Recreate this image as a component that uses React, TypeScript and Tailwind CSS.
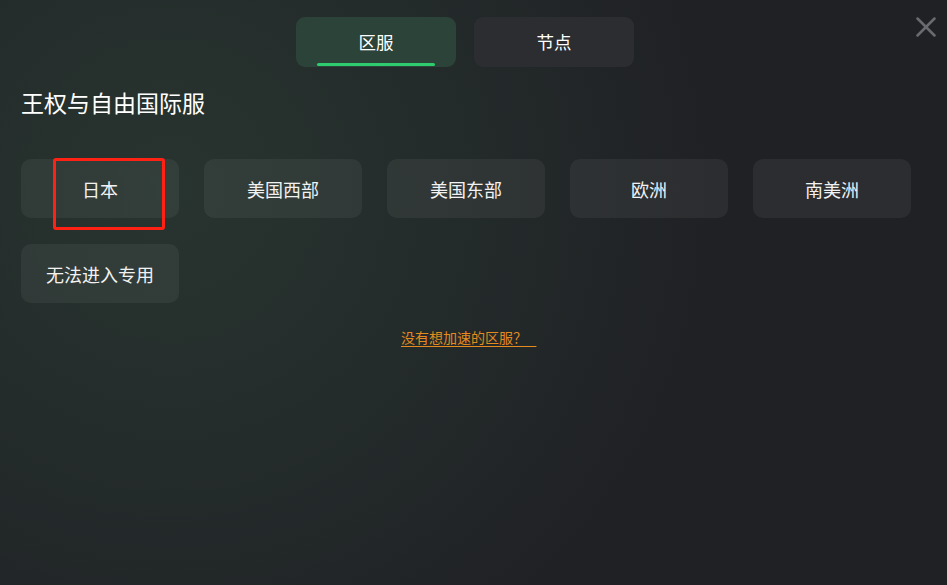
import React, { useState } from 'react';
import { X } from 'lucide-react';

const REGIONS = ['日本', '美国西部', '美国东部', '欧洲', '南美洲', '无法进入专用'];

export default function App() {
  const [tab, setTab] = useState(0);

  return (
    <div
      className="relative w-[947px] h-[585px] overflow-hidden bg-[#202125] bg-[radial-gradient(circle_at_170px_190px,#28342f_0%,#242c2b_30%,#202125_62%)] text-white"
      style={{ fontFamily: '"Noto Sans CJK SC", "Noto Sans", sans-serif' }}
    >
      {/* Tabs */}
      <div className="flex gap-[18px] pl-[296px] pt-[17px]">
        {['区服', '节点'].map((t, i) => (
          <button
            key={t}
            onClick={() => setTab(i)}
            className={`relative w-[160px] h-[50px] rounded-[9px] text-[17.5px] leading-none ${
              tab === i ? 'bg-[#2b4338]' : 'bg-[#2c2d31]'
            }`}
          >
            {t}
            {tab === i && (
              <span className="absolute left-[21px] bottom-[1px] w-[118px] h-[3px] rounded-full bg-[#2ecc6e]" />
            )}
          </button>
        ))}
      </div>

      <button className="absolute right-[4px] top-[10px] text-[#6a6b70]">
        <X size={34} strokeWidth={1.8} />
      </button>

      {/* Title */}
      <h1 className="mt-[20px] pl-[21px] text-[23px] leading-[30px] font-normal">王权与自由国际服</h1>

      {/* Region grid */}
      <div className="mt-[42px] grid grid-cols-[repeat(5,158px)] gap-x-[25px] gap-y-[26px] pl-[21px]">
        {REGIONS.map((r) => (
          <button
            key={r}
            className="h-[59px] rounded-[10px] bg-white/[0.055] text-[18px] leading-none text-[#f2f2f2]"
          >
            {r}
          </button>
        ))}
      </div>

      <div className="mt-[21px] pl-[401px]">
        <a className="text-[14px] leading-[20px] text-[#e58a1f] underline underline-offset-[3px] whitespace-pre cursor-pointer">
          {'没有想加速的区服？   '}
        </a>
      </div>

      {/* annotation box */}
      <div className="absolute left-[53px] top-[158px] w-[112px] h-[72px] border-[3px] border-[#ff2214] rounded-[3px] pointer-events-none" />
    </div>
  );
}
